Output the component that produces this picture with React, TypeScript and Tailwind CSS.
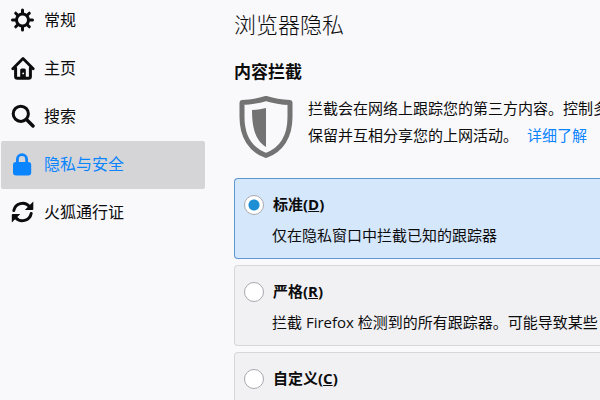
import { useState, type ReactNode } from "react"

interface Category {
  id: string
  label: string
  icon: ReactNode
}

interface BlockingOption {
  id: string
  label: string
  accessKey: string
  description?: string
}

const categories: Category[] = [
  {
    id: "general",
    label: "常规",
    icon: (
      <svg viewBox="0 0 24 24" className="size-6" fill="none" stroke="currentColor" strokeLinecap="round">
        <circle cx="11.5" cy="12" r="6" strokeWidth="3" />
        <path
          strokeWidth="3"
          d="M11.5 5V2M11.5 19v3M4.5 12h-3M18.5 12h3M6.500 7 4.700 5.200M16.500 17l1.800 1.800M16.500 7l1.800-1.800M6.500 17l-1.800 1.800"
        />
      </svg>
    ),
  },
  {
    id: "home",
    label: "主页",
    icon: (
      <svg viewBox="0 0 24 24" className="size-6" fill="none" stroke="currentColor" strokeLinecap="round" strokeLinejoin="round">
        <path strokeWidth="2.8" d="M1.800 12.800 12 2.500l10.200 10.300" />
        <path strokeWidth="3" d="M4.600 12v8.500q0 1.800 1.800 1.800h11.200q1.800 0 1.800-1.800V12" />
        <path
          fill="currentColor"
          stroke="none"
          fillRule="evenodd"
          d="M9.200 22v-8a1.500 1.500 0 0 1 1.500-1.500h2.600a1.500 1.500 0 0 1 1.500 1.500v8zM12.200 16.500a.9.9 0 1 0 0 1.800.9.9 0 0 0 0-1.800z"
        />
      </svg>
    ),
  },
  {
    id: "search",
    label: "搜索",
    icon: (
      <svg viewBox="0 0 24 24" className="size-6" fill="none" stroke="currentColor" strokeLinecap="round">
        <circle cx="9.8" cy="9.8" r="7.6" strokeWidth="3" />
        <path strokeWidth="3.4" d="m15.500 15.500 6.500 6.500" />
      </svg>
    ),
  },
  {
    id: "privacy",
    label: "隐私与安全",
    icon: (
      <svg viewBox="0 0 24 24" className="size-6" fill="currentColor">
        <path d="M17 10V7.200a6 6 0 0 0-12 0V10a3 3 0 0 0-3 3v7.500a3 3 0 0 0 3 3h12.200a3 3 0 0 0 3-3V13a3 3 0 0 0-3-3zM7.800 7.200a3.200 3.200 0 0 1 6.400 0V10H7.800z" />
      </svg>
    ),
  },
  {
    id: "sync",
    label: "火狐通行证",
    icon: (
      <svg viewBox="0 0 24 24" className="size-6" fill="none" stroke="currentColor" strokeLinecap="round">
        <path strokeWidth="3" d="M2.800 10.500A9 9 0 0 1 18.500 6.500M20.200 13.500A9 9 0 0 1 4.500 17.500" />
        <path fill="currentColor" stroke="none" d="M22.300 1.500v7.500a1 1 0 0 1-1 1h-7.500zM.8 22.500V15a1 1 0 0 1 1-1h7.500z" />
      </svg>
    ),
  },
]

const options: BlockingOption[] = [
  { id: "standard", label: "标准", accessKey: "D", description: "仅在隐私窗口中拦截已知的跟踪器" },
  { id: "strict", label: "严格", accessKey: "R", description: "拦截 Firefox 检测到的所有跟踪器。可能导致某些" },
  { id: "custom", label: "自定义", accessKey: "C" },
]

function ShieldIcon() {
  return (
    <svg viewBox="0 0 56 64" className="h-16 w-14 shrink-0 text-[#737373]" aria-hidden="true">
      <path
        fill="none"
        stroke="currentColor"
        strokeWidth="5"
        strokeLinejoin="round"
        d="M28 3.500Q39 7 52 7.500V22C52 42 43 55 28 60.500C13 55 4 42 4 22V7.500Q17 7 28 3.500Z"
      />
      <path fill="currentColor" d="M28 13v39C18 46 14 34 14 15Q21 15 28 13Z" />
    </svg>
  )
}

export default function App() {
  const [category, setCategory] = useState("privacy")
  const [selected, setSelected] = useState("standard")

  return (
    <div className="flex h-screen overflow-hidden bg-[#f9f9fb] font-['Open_Sans','Noto_Sans_CJK_SC',sans-serif] text-[#0c0c0d]">
      <nav className="-mt-[3px] ml-px w-[204px] shrink-0">
        {categories.map((c) => (
          <button
            key={c.id}
            type="button"
            onClick={() => setCategory(c.id)}
            className={`flex h-12 w-full items-center gap-[9px] rounded-xs pb-0.5 pl-[10px] text-left text-base ${
              category === c.id ? "bg-[#d5d5d7] text-[#0a84ff]" : ""
            }`}
          >
            {c.icon}
            <span>{c.label}</span>
          </button>
        ))}
      </nav>

      <main className="ml-[29px] min-w-0 flex-1 overflow-hidden pt-2 whitespace-nowrap">
        <h1 className="text-[22px] leading-8 font-light">浏览器隐私</h1>
        <h2 className="mt-5 text-[17px] leading-6 font-bold">内容拦截</h2>

        <div className="mt-[11px] flex gap-[14px] pl-1">
          <ShieldIcon />
          <div className="text-[15px] leading-[27px]">
            <p>拦截会在网络上跟踪您的第三方内容。控制多</p>
            <p>
              保留并互相分享您的上网活动。
              <a href="#learn-more" className="ml-[9px] text-[#0a84ff]">
                详细了解
              </a>
            </p>
          </div>
        </div>

        <div className="mt-[19px] space-y-[6px]">
          {options.map((o) => {
            const checked = selected === o.id
            return (
              <div
                key={o.id}
                className={`flex min-h-[81px] gap-2 rounded-l border-y border-l pt-[15px] pl-[9px] text-[15px] ${
                  checked ? "border-[#5f97d3] bg-[#d5e7fb]" : "border-[#d7d7db] bg-[#f1f1f4]"
                }`}
              >
                <input
                  type="radio"
                  name="blocking"
                  id={o.id}
                  checked={checked}
                  onChange={() => setSelected(o.id)}
                  className="mt-px size-5 shrink-0 appearance-none rounded-full border border-[#a9a9ae] bg-white checked:bg-[radial-gradient(circle,#1e8fd5_5px,#fff_6px)]"
                />
                <div>
                  <label htmlFor={o.id} className="block pl-px leading-5 font-bold">
                    {o.label}(<u>{o.accessKey}</u>)
                  </label>
                  {o.description && <p className="mt-[11px] leading-5">{o.description}</p>}
                </div>
              </div>
            )
          })}
        </div>
      </main>
    </div>
  )
}
